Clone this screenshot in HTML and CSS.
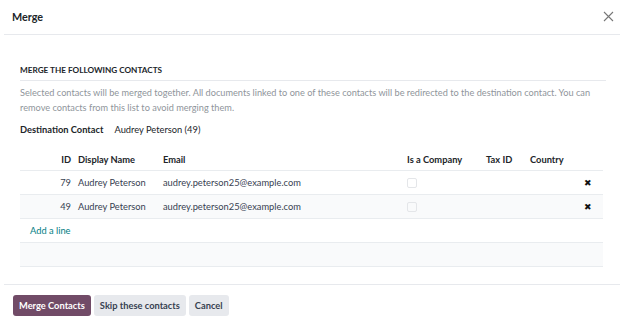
FILE: index.html
```html
<!DOCTYPE html>
<html>
<head>
<meta charset="utf-8">
<link rel="stylesheet" href="styles.css">
</head>
<body>
<div class="modal">
  <header class="modal-header">
    <h4 class="modal-title">Merge</h4>
    <button class="close" aria-label="Close">
      <svg width="11" height="11" viewBox="0 0 11 11"><path d="M1 1L10 10M10 1L1 10" stroke="#777" stroke-width="1.1" fill="none"/></svg>
    </button>
  </header>
  <main class="modal-body">
    <div class="separator">MERGE THE FOLLOWING CONTACTS</div>
    <p class="desc">Selected contacts will be merged together. All documents linked to one of these contacts will be redirected to the destination contact. You can remove contacts from this list to avoid merging them.</p>
    <div class="field">
      <span class="label">Destination Contact</span>
      <span class="value">Audrey Peterson (49)</span>
    </div>
    <table class="list">
      <thead>
        <tr>
          <th class="c-id">ID</th>
          <th class="c-name">Display Name</th>
          <th class="c-email">Email</th>
          <th class="c-company">Is a Company</th>
          <th class="c-tax">Tax ID</th>
          <th class="c-country">Country</th>
          <th class="c-del"></th>
        </tr>
      </thead>
      <tbody>
        <tr class="row">
          <td class="c-id">79</td>
          <td>Audrey Peterson</td>
          <td>audrey.peterson25@example.com</td>
          <td><span class="check"></span></td>
          <td></td>
          <td></td>
          <td class="c-del"><span class="del">&#x2716;</span></td>
        </tr>
        <tr class="row alt">
          <td class="c-id">49</td>
          <td>Audrey Peterson</td>
          <td>audrey.peterson25@example.com</td>
          <td><span class="check"></span></td>
          <td></td>
          <td></td>
          <td class="c-del"><span class="del">&#x2716;</span></td>
        </tr>
        <tr class="row add">
          <td colspan="7"><a class="add-line">Add a line</a></td>
        </tr>
        <tr class="row alt empty">
          <td colspan="7"></td>
        </tr>
      </tbody>
    </table>
  </main>
  <footer class="modal-footer">
    <button class="btn btn-primary">Merge Contacts</button>
    <button class="btn btn-secondary">Skip these contacts</button>
    <button class="btn btn-secondary">Cancel</button>
  </footer>
</div>
</body>
</html>
```
FILE: styles.css
```css
* { box-sizing: border-box; }
html, body { margin: 0; padding: 0; background: #fff; }
body {
  font-family: Lato, "Open Sans", sans-serif;
  font-size: 9.3px;
  color: #374151;
  width: 624px;
  height: 321px;
  overflow: hidden;
}
.modal { padding: 0 4px; }
.modal-header {
  height: 35px;
  display: flex;
  align-items: center;
  justify-content: space-between;
  padding: 0 6px 1px 8px;
  border-bottom: 1px solid #e7e9ed;
}
.modal-title {
  margin: 0;
  font-size: 10.8px;
  font-weight: 700;
  color: #212529;
}
.close {
  border: 0;
  background: none;
  padding: 0;
  width: 12px;
  height: 12px;
  display: flex;
  align-items: center;
  justify-content: center;
}
.modal-body { padding: 29px 14px 17px 16px; }
.separator {
  font-size: 8.2px;
  font-weight: 700;
  color: #212529;
  padding-bottom: 4px;
  border-bottom: 1px solid #e7e9ed;
  line-height: 12px;
}
.desc {
  margin: 4px 0 0;
  color: #8f959b;
  line-height: 15px;
  font-size: 9.2px;
}
.field {
  margin-top: 8px;
  display: flex;
  gap: 11px;
  line-height: 14px;
  color: #212529;
}
.label { font-weight: 700; }
.list {
  margin-top: 10px;
  width: 583px;
  border-collapse: collapse;
  table-layout: fixed;
}
.list th {
  font-weight: 700;
  text-align: left;
  height: 23px;
  padding: 2px 4px 0 2px;
  color: #212529;
  border-bottom: 1px solid #e9ecef;
}
.list td {
  height: 24px;
  padding: 0 4px 0 2px;
  border-bottom: 1px solid #e9ecef;
  color: #374151;
  white-space: nowrap;
}
.c-id { width: 56px; text-align: right !important; }
.list th.c-id, .list td.c-id { padding-right: 5px; }
.c-name { width: 85px; }
.c-email { width: 244px; }
.c-company { width: 79px; }
.c-tax { width: 44px; }
.c-country { width: 50px; }
.c-del { text-align: right; padding-right: 11px !important; }
.alt td { background: #f9fafb; }
.check {
  display: inline-block;
  width: 10px;
  height: 10px;
  border: 1px solid #e4e6e9;
  border-radius: 2px;
  vertical-align: middle;
}
.del { font-size: 8.5px; color: #111; }
.add td { padding-left: 10px; }
.add-line { color: #017e84; cursor: pointer; }
.modal-footer {
  border-top: 1px solid #e7e9ed;
  padding: 10px 9px;
  display: flex;
  gap: 3px;
}
.btn {
  font-family: inherit;
  font-size: 9.3px;
  font-weight: 700;
  border: 0;
  border-radius: 3px;
  height: 21px;
  padding: 0 6px;
}
.btn-primary { background: #714b67; color: #fff; }
.btn-secondary { background: #e7e9ed; color: #374151; }
```
